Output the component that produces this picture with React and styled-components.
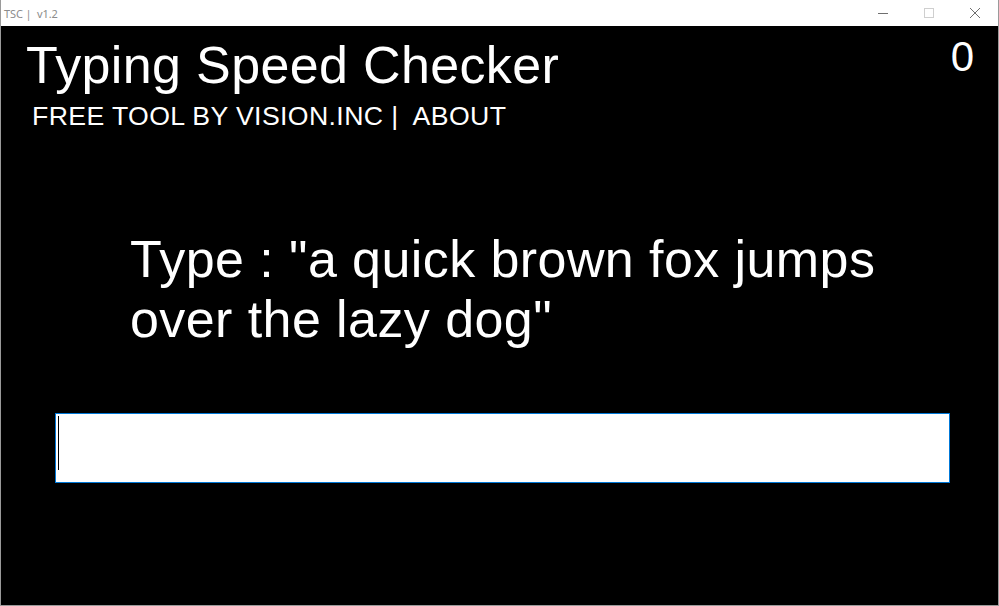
import React from 'react';
import styled, { createGlobalStyle } from 'styled-components';

const GlobalStyle = createGlobalStyle`
  html, body {
    margin: 0;
    padding: 0;
    background: #ffffff;
  }
  * {
    box-sizing: border-box;
  }
`;

const Window = styled.div`
  width: 999px;
  height: 606px;
  display: flex;
  flex-direction: column;
  border: 1px solid #9a9a9a;
  border-top: none;
  background: #000000;
  overflow: hidden;
`;

const TitleBar = styled.div`
  height: 26px;
  flex: none;
  display: flex;
  align-items: stretch;
  background: #ffffff;
`;

const TitleText = styled.div`
  flex: 1;
  padding-left: 3px;
  display: flex;
  align-items: center;
  font-family: "Noto Sans", "Open Sans", sans-serif;
  font-size: 11px;
  letter-spacing: -0.1px;
  color: #8c8c8c;
  white-space: pre;
`;

const CaptionButton = styled.div`
  width: 46px;
  display: flex;
  align-items: center;
  justify-content: center;
  color: ${({ $disabled }) => ($disabled ? '#cfcfcf' : '#6f6f6f')};
`;

const Content = styled.div`
  flex: 1;
  display: flex;
  flex-direction: column;
  padding: 10px 24px 0 25px;
  font-family: "Liberation Sans", Arial, sans-serif;
  color: #ffffff;
`;

const Header = styled.div`
  display: flex;
  justify-content: space-between;
  align-items: flex-start;
`;

const Brand = styled.div`
  display: flex;
  flex-direction: column;
`;

const Title = styled.h1`
  margin: 0;
  font-size: 52px;
  font-weight: 400;
  line-height: 58px;
  letter-spacing: 0.35px;
`;

const Subtitle = styled.div`
  margin: 7px 0 0 6px;
  font-size: 26.67px;
  line-height: 30px;
  letter-spacing: 0.38px;
  white-space: pre;
`;

const Counter = styled.div`
  font-size: 42px;
  line-height: 42px;
`;

const Prompt = styled.p`
  margin: 98px 0 0 104px;
  max-width: 790px;
  font-size: 52px;
  line-height: 60px;
  letter-spacing: 0.42px;
`;

const InputWrap = styled.div`
  position: relative;
  margin: 64px 0 0 29px;
  width: 895px;
  height: 70px;
`;

const TypeInput = styled.input`
  width: 100%;
  height: 100%;
  border: 1px solid #0078d7;
  outline: none;
  padding: 0 4px;
  background: #ffffff;
  font-family: "Liberation Sans", Arial, sans-serif;
  font-size: 40px;
  caret-color: transparent;
`;

const Caret = styled.span`
  position: absolute;
  left: 3px;
  top: 3px;
  width: 1px;
  height: 54px;
  background: #000000;
  pointer-events: none;
`;

const MinimizeIcon = () => (
  <svg width="10" height="10" viewBox="0 0 10 10">
    <line x1="0" y1="5.5" x2="10" y2="5.5" stroke="currentColor" strokeWidth="1" />
  </svg>
);

const MaximizeIcon = () => (
  <svg width="10" height="10" viewBox="0 0 10 10">
    <rect x="0.5" y="0.5" width="9" height="9" fill="none" stroke="currentColor" strokeWidth="1" />
  </svg>
);

const CloseIcon = () => (
  <svg width="10" height="10" viewBox="0 0 10 10">
    <path d="M0 0 L10 10 M10 0 L0 10" stroke="currentColor" strokeWidth="1" />
  </svg>
);

const App = () => (
  <>
    <GlobalStyle />
    <Window>
      <TitleBar>
        <TitleText>{'TSC |  v1.2'}</TitleText>
        <CaptionButton><MinimizeIcon /></CaptionButton>
        <CaptionButton $disabled><MaximizeIcon /></CaptionButton>
        <CaptionButton><CloseIcon /></CaptionButton>
      </TitleBar>
      <Content>
        <Header>
          <Brand>
            <Title>Typing Speed Checker</Title>
            <Subtitle>{'FREE TOOL BY VISION.INC |  ABOUT'}</Subtitle>
          </Brand>
          <Counter>0</Counter>
        </Header>
        <Prompt>Type : "a quick brown fox jumps over the lazy dog"</Prompt>
        <InputWrap>
          <TypeInput type="text" />
          <Caret />
        </InputWrap>
      </Content>
    </Window>
  </>
);

export default App;
